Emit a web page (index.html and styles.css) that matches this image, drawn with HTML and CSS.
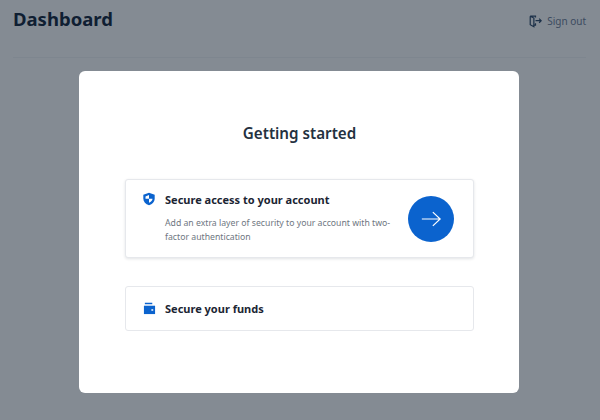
FILE: index.html
```html
<!DOCTYPE html>
<html lang="en">
<head>
    <meta charset="UTF-8">
    <meta name="viewport" content="width=device-width, initial-scale=1.0">
    <title>Dashboard</title>
    <link rel="stylesheet" href="styles.css">
</head>
<body>
    <header class="topbar">
        <h1 class="topbar-title">Dashboard</h1>
        <a class="signout" href="#">
            <svg class="signout-icon" viewBox="0 0 16 16" width="13" height="13" fill="none" stroke="currentColor" stroke-width="1.5">
                <path d="M8 3V1.500H1.500l4.500 2.200v10.800l-4.500-2.500V1.500"/>
                <path d="M6 12.500h2V10"/>
                <path d="M8 7h7M12.500 4.500 15 7l-2.500 2.500"/>
            </svg>
            <span>Sign out</span>
        </a>
    </header>

    <div class="overlay">
        <div class="modal">
            <h2 class="modal-title">Getting started</h2>

            <div class="step step-open">
                <svg class="step-icon" viewBox="0 0 16 16" width="14" height="14">
                    <path fill="#0b63ce" d="M8 .8 14.500 3v4.500c0 3.700-2.700 6.400-6.500 7.700-3.800-1.300-6.500-4-6.500-7.700V3z"/>
                    <path fill="#fff" d="M8 3.500 4 5v2.800h4zM8 7.800v4.500c2.300-.9 4-2.500 4-4.500z"/>
                </svg>
                <div class="step-body">
                    <h3 class="step-title">Secure access to your account</h3>
                    <p class="step-text">Add an extra layer of security to your account with two-factor authentication</p>
                </div>
                <button class="step-go">
                    <svg viewBox="0 0 24 24" width="22" height="22" fill="none" stroke="#fff" stroke-width="1.300">
                        <path d="M2 12h20M14 4.500 22 12l-8 7.500"/>
                    </svg>
                </button>
            </div>

            <div class="step step-closed">
                <svg class="step-icon" viewBox="0 0 14 14" width="13" height="13">
                    <path fill="#0b63ce" d="M2 .8h8v1.600H2z"/>
                    <path fill="#0b63ce" d="M1 4h12v9H1z"/>
                    <path fill="#fff" d="M9 7.800h2v1.600H9z"/>
                </svg>
                <h3 class="step-title">Secure your funds</h3>
            </div>
        </div>
    </div>
</body>
</html>
```

FILE: styles.css
```css
* {
    box-sizing: border-box;
}

body {
    font-family: "Noto Sans", "Open Sans", sans-serif;
    margin: 0;
    padding: 0;
    background-color: #fff;
    color: #14263c;
    height: 420px;
    overflow: hidden;
}

.topbar {
    display: flex;
    justify-content: space-between;
    align-items: center;
    height: 58px;
    margin: 0 14px 0 13px;
    padding-bottom: 20px;
    border-bottom: 1px solid #f3f4f6;
}

.topbar-title {
    margin: 0;
    font-size: 18.500px;
    font-weight: 700;
    line-height: 26px;
}

.signout {
    display: flex;
    align-items: center;
    gap: 5px;
    padding-top: 5px;
    font-size: 10px;
    color: #6f8097;
    text-decoration: none;
}

.signout-icon {
    color: #2f4a6b;
}

.overlay {
    position: fixed;
    inset: 0;
    display: flex;
    justify-content: center;
    align-items: flex-start;
    padding: 71px 2px 0 0;
    background: rgba(10, 24, 40, 0.5);
}

.modal {
    width: 440px;
    height: 322px;
    padding: 51px 45px 0 46px;
    background: #fff;
    border-radius: 6px;
}

.modal-title {
    margin: 0 0 35px;
    font-size: 15.200px;
    font-weight: 600;
    line-height: 22px;
    text-align: center;
    color: #243140;
}

.step {
    display: flex;
    background: #fff;
    border: 1px solid #e6e8ec;
    border-radius: 3px;
}

.step-open {
    height: 79px;
    padding: 12px 19px 0 16px;
    margin-bottom: 28px;
    box-shadow: 0 1px 3px rgba(20, 30, 50, 0.12);
}

.step-closed {
    height: 45px;
    align-items: center;
    padding: 0 17px;
}

.step-icon {
    flex: none;
    margin-right: 9px;
}

.step-body {
    flex: 1;
    min-width: 0;
}

.step-title {
    margin: 0;
    font-size: 11px;
    font-weight: 700;
    line-height: 16px;
    color: #1b2533;
}

.step-text {
    margin: 9px 0 0;
    font-size: 8.700px;
    line-height: 13.500px;
    color: #6e7681;
}

.step-go {
    flex: none;
    width: 46px;
    height: 46px;
    margin: 4px 0 0 12px;
    padding: 0;
    display: flex;
    align-items: center;
    justify-content: center;
    border: none;
    border-radius: 50%;
    background: #0b63ce;
}
```
